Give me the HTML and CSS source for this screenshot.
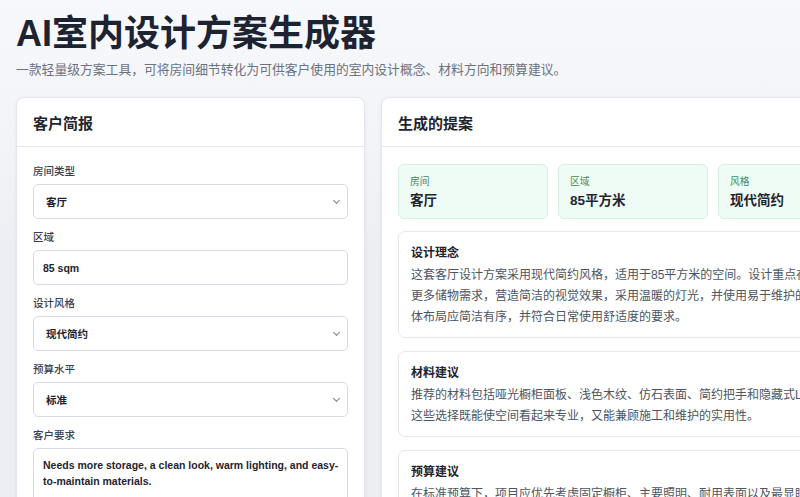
FILE: index.html
```html
<!doctype html>
<html lang="zh-CN">
<head>
  <meta charset="UTF-8">
  <meta name="viewport" content="width=device-width, initial-scale=1.0">
  <title>AI室内设计方案生成器</title>
  <link rel="stylesheet" href="styles.css">
</head>
<body>
  <div class="page">
    <h1 class="title">AI室内设计方案生成器</h1>
    <p class="subtitle">一款轻量级方案工具，可将房间细节转化为可供客户使用的室内设计概念、材料方向和预算建议。</p>

    <div class="layout">
      <section class="card brief">
        <div class="card-head">客户简报</div>
        <form class="card-body form">
          <div class="field">
            <label for="room">房间类型</label>
            <div class="select-wrap">
              <select id="room">
                <option selected>客厅</option>
                <option>卧室</option>
                <option>厨房</option>
              </select>
            </div>
          </div>
          <div class="field">
            <label for="area">区域</label>
            <input id="area" type="text" value="85 sqm">
          </div>
          <div class="field">
            <label for="style">设计风格</label>
            <div class="select-wrap">
              <select id="style">
                <option selected>现代简约</option>
                <option>北欧</option>
                <option>新中式</option>
              </select>
            </div>
          </div>
          <div class="field">
            <label for="budget">预算水平</label>
            <div class="select-wrap">
              <select id="budget">
                <option>经济</option>
                <option selected>标准</option>
                <option>高端</option>
              </select>
            </div>
          </div>
          <div class="field">
            <label for="needs">客户要求</label>
            <textarea id="needs">Needs more storage, a clean look, warm lighting, and easy-to-maintain materials.</textarea>
          </div>
        </form>
      </section>

      <section class="card proposal">
        <div class="card-head">生成的提案</div>
        <div class="card-body">
          <div class="stats">
            <div class="stat">
              <div class="stat-label">房间</div>
              <div class="stat-value">客厅</div>
            </div>
            <div class="stat">
              <div class="stat-label">区域</div>
              <div class="stat-value">85平方米</div>
            </div>
            <div class="stat">
              <div class="stat-label">风格</div>
              <div class="stat-value">现代简约</div>
            </div>
            <div class="stat">
              <div class="stat-label">预算</div>
              <div class="stat-value">标准</div>
            </div>
          </div>

          <div class="sections">
            <div class="block">
              <h3>设计理念</h3>
              <p>这套客厅设计方案采用现代简约风格，适用于85平方米的空间。设计重点在于合理规划有限面积，满足客户提出的更多储物需求，营造简洁的视觉效果，采用温暖的灯光，并使用易于维护的饰面材料，以兼顾美观与长期耐用。整体布局应简洁有序，并符合日常使用舒适度的要求。</p>
            </div>
            <div class="block">
              <h3>材料建议</h3>
              <p>推荐的材料包括哑光橱柜面板、浅色木纹、仿石表面、简约把手和隐藏式LED灯带，让整体色调统一且质感温润。这些选择既能使空间看起来专业，又能兼顾施工和维护的实用性。</p>
            </div>
            <div class="block">
              <h3>预算建议</h3>
              <p>在标准预算下，项目应优先考虑固定橱柜、主要照明、耐用表面以及最显眼的饰面部位，装饰性软装可在后期根据实际预算逐步补充。</p>
            </div>
          </div>
        </div>
      </section>
    </div>
  </div>
</body>
</html>
```

FILE: styles.css
```css
html,
body {
    overflow: hidden;
}

body {
    margin: 0;
    background: linear-gradient(180deg, #f7f8fb 0px, #f3f4f8 140px, #eceef3 260px);
    font-family: "Liberation Sans", "Noto Sans CJK SC", sans-serif;
    color: #1f2430;
}

.page {
    padding: 12px 16px 24px;
}

.title {
    margin: 0;
    font-size: 36px;
    line-height: 43px;
    font-weight: 700;
    color: #1d2330;
}

.subtitle {
    margin: 5px 0 0;
    font-size: 12.8px;
    line-height: 20px;
    color: #6b7280;
}

.layout {
    display: grid;
    grid-template-columns: 349px 664px;
    gap: 16px;
    align-items: start;
    margin-top: 17px;
}

.card {
    background: #fff;
    border: 1px solid #e3e6ec;
    border-radius: 8px;
    box-shadow: 0 1px 4px rgba(30, 40, 60, 0.06);
}

.card-head {
    height: 48px;
    display: flex;
    align-items: center;
    padding: 0 16px;
    border-bottom: 1px solid #e5e7ed;
    font-size: 15px;
    font-weight: 600;
    color: #1f2430;
}

.card-body {
    padding: 16px;
}

/* form column */
.form {
    display: flex;
    flex-direction: column;
    gap: 10px;
}

.field label {
    display: block;
    font-size: 10.5px;
    line-height: 16px;
    font-weight: 500;
    color: #374151;
    margin-bottom: 5px;
}

.field input,
.field select,
.field textarea {
    display: block;
    box-sizing: border-box;
    width: 100%;
    border: 1px solid #d6dce6;
    border-radius: 5px;
    background: #fff;
    font-family: "Liberation Sans", "Noto Sans CJK SC", sans-serif;
    font-size: 10.5px;
    font-weight: 700;
    color: #1f2430;
    outline: none;
}

.field input,
.field select {
    height: 35px;
    padding: 0 9px;
}

.field select {
    appearance: none;
    -webkit-appearance: none;
    padding-left: 12px;
    font-weight: 600;
}

.select-wrap {
    position: relative;
}

/* small chevron drawn over the select's right edge */
.select-wrap::after {
    content: "";
    position: absolute;
    right: 9px;
    top: 14px;
    width: 4px;
    height: 4px;
    border-right: 1px solid #7b8290;
    border-bottom: 1px solid #7b8290;
    transform: rotate(45deg);
    pointer-events: none;
}

.field textarea {
    height: 96px;
    padding: 8px 3px 7px 9px;
    line-height: 16px;
    resize: none;
    overflow: hidden;
}

/* proposal column */
.proposal .card-body {
    padding-top: 17px;
}

.stats {
    display: grid;
    grid-template-columns: repeat(4, 1fr);
    gap: 10px;
    margin-bottom: 12px;
}

.stat {
    background: #effcf5;
    border: 1px solid #d5f1e2;
    border-radius: 6px;
    padding: 10px 11px 8px;
}

.stat-label {
    font-size: 9.75px;
    line-height: 14px;
    color: #3f8b61;
    margin-bottom: 2px;
}

.stat-value {
    font-size: 13.5px;
    line-height: 19px;
    font-weight: 600;
    color: #1f2430;
}

.sections {
    display: flex;
    flex-direction: column;
    gap: 13px;
}

.block {
    border: 1px solid #e6e8ee;
    border-radius: 7px;
    background: #fff;
    padding: 12px 12px 9px;
}

.block h3 {
    margin: 0 0 3px;
    font-size: 12px;
    line-height: 18px;
    font-weight: 700;
    color: #1f2430;
}

.block p {
    margin: 0;
    font-size: 12px;
    line-height: 21px;
    color: #4b5563;
}
```
